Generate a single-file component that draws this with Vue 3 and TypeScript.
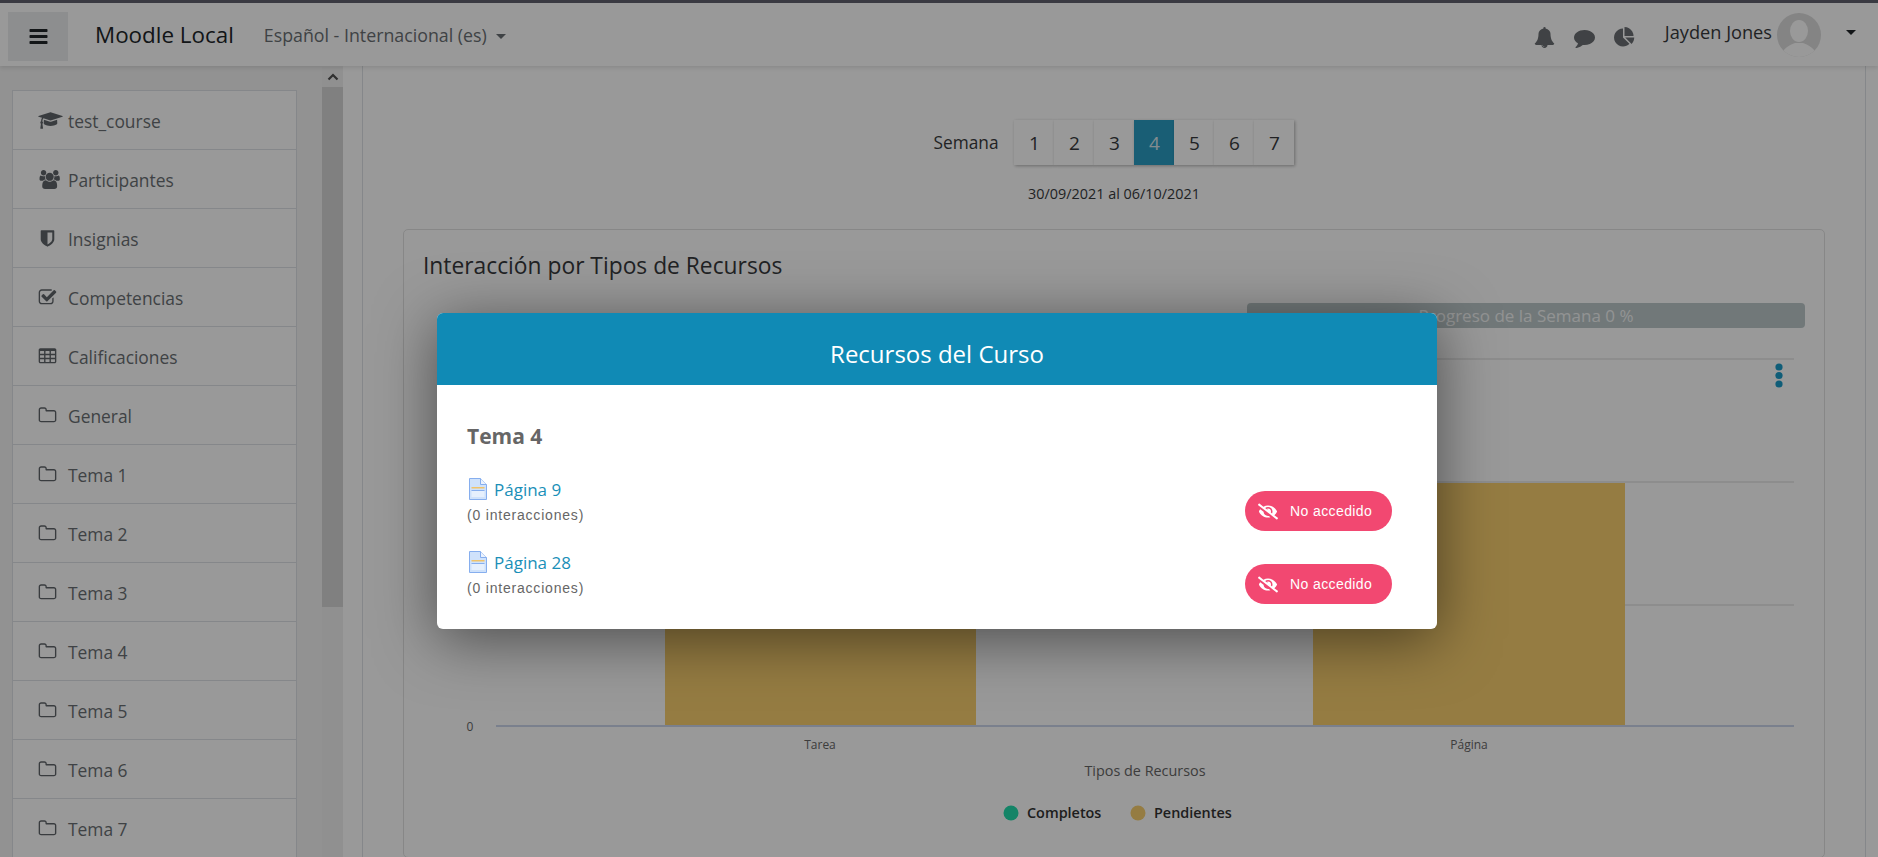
<template>
  <div class="page">
    <header class="navbar">
      <button class="menu-btn">
        <svg class="ic-bars" viewBox="0 0 1792 1792"><path :d="icons.bars" /></svg>
      </button>
      <span class="brand">Moodle Local</span>
      <span class="lang">Español - Internacional ‎(es)‎<i class="caret"></i></span>
      <div class="nav-right">
        <svg class="nav-ic" viewBox="0 0 1792 1792"><path :d="icons.bell" /></svg>
        <svg class="nav-ic" viewBox="0 0 1792 1792"><path :d="icons.comment" /></svg>
        <svg class="nav-ic" viewBox="0 0 1792 1792"><path :d="icons.pie" /></svg>
        <span class="user">Jayden Jones</span>
        <svg class="avatar" viewBox="0 0 44 44">
          <defs><clipPath id="av"><circle cx="22" cy="22" r="22" /></clipPath></defs>
          <circle cx="22" cy="22" r="22" fill="#dcdcdc" />
          <g clip-path="url(#av)" fill="#fff">
            <ellipse cx="22" cy="18" rx="9" ry="11" />
            <path d="M4 44c1-9 9-12 14-14h8c5 2 13 5 14 14z" />
          </g>
        </svg>
        <i class="caret dark"></i>
      </div>
    </header>

    <div class="layout">
      <aside class="sidebar">
        <div class="side-list">
          <a v-for="item in sideItems" :key="item.label" class="side-item">
            <span class="side-ic">
              <svg :width="item.w" height="19" :viewBox="item.box"><path :d="item.path" /></svg>
            </span>
            {{ item.label }}
          </a>
        </div>
        <div class="scrollbar">
          <svg class="scroll-up" viewBox="0 0 12 8"><path d="M1.5 6.5 6 2l4.5 4.5" /></svg>
          <div class="scroll-thumb"></div>
        </div>
      </aside>

      <main class="content">
        <div class="weeks">
          <span class="weeks-label">Semana</span>
          <div class="week-btns">
            <span v-for="w in weeks" :key="w" class="week" :class="{ active: w === 4 }">{{ w }}</span>
          </div>
        </div>
        <p class="range">30/09/2021 al 06/10/2021</p>

        <section class="card">
          <h3 class="card-title">Interacción por Tipos de Recursos</h3>
          <div class="progress">Progreso de la Semana 0 %</div>
          <svg class="chart" width="1420" height="527" viewBox="404 330 1420 527">
            <line v-for="y in [359, 482, 605]" :key="y" x1="496" x2="1794" :y1="y" :y2="y" stroke="#e6e6e6" stroke-width="1.5" />
            <rect x="665" y="483" width="311" height="243" fill="#f8cf6f" />
            <rect x="1313" y="483" width="312" height="243" fill="#f8cf6f" />
            <line x1="496" x2="1794" y1="726" y2="726" stroke="#ccd6eb" stroke-width="2" />
            <circle cx="1779" cy="367" r="3.6" fill="#1a9cc9" />
            <circle cx="1779" cy="375.500" r="3.6" fill="#1a9cc9" />
            <circle cx="1779" cy="384" r="3.6" fill="#1a9cc9" />
            <text x="470" y="731" class="axis" text-anchor="middle">0</text>
            <text x="820" y="749" class="axis" text-anchor="middle">Tarea</text>
            <text x="1469" y="749" class="axis" text-anchor="middle">Página</text>
            <text x="1145" y="776" class="axis-title" text-anchor="middle">Tipos de Recursos</text>
            <circle cx="1011" cy="813" r="7.500" fill="#22ddac" />
            <text x="1027" y="818" class="legend">Completos</text>
            <circle cx="1138" cy="813" r="7.500" fill="#f8cf6f" />
            <text x="1154" y="818" class="legend">Pendientes</text>
          </svg>
        </section>
      </main>
    </div>

    <div class="overlay">
      <div class="modal">
        <div class="modal-head">Recursos del Curso</div>
        <div class="modal-body">
          <h4 class="topic">Tema 4</h4>
          <div v-for="res in resources" :key="res" class="res-row">
            <div>
              <a class="res-link">
                <svg class="page-ic" viewBox="0 0 18 22">
                  <path d="M.5.5h11l6 6v15H.5z" fill="#cfe2fb" stroke="#86aeee" />
                  <path d="M11.500.5v6h6" fill="#eaf2fe" stroke="#86aeee" />
                  <rect x="2.500" y="9" width="13" height="1.500" fill="#f0c36a" />
                  <rect x="2.500" y="12" width="13" height="1" fill="#86aeee" />
                  <rect x="2.500" y="13" width="13" height="6" fill="#e6f0fd" />
                </svg>
                {{ res }}
              </a>
              <div class="res-sub">(0 interacciones)</div>
            </div>
            <span class="pill">
              <svg class="pill-ic" viewBox="0 0 640 512"><path :d="icons.eyeSlash" /></svg>
              No accedido
            </span>
          </div>
        </div>
      </div>
    </div>
  </div>
</template>

<script setup lang="ts">
const icons = {
  bars: 'M1664 1344v128q0 26-19 45t-45 19h-1408q-26 0-45-19t-19-45v-128q0-26 19-45t45-19h1408q26 0 45 19t19 45zm0-512v128q0 26-19 45t-45 19h-1408q-26 0-45-19t-19-45v-128q0-26 19-45t45-19h1408q26 0 45 19t19 45zm0-512v128q0 26-19 45t-45 19h-1408q-26 0-45-19t-19-45v-128q0-26 19-45t45-19h1408q26 0 45 19t19 45z',
  bell: 'M912 1696q0-16-16-16-59 0-101.5-42.5t-42.5-101.5q0-16-16-16t-16 16q0 73 51.5 124.5t124.5 51.5q16 0 16-16zm816-288q0 52-38 90t-90 38h-448q0 106-75 181t-181 75-181-75-75-181h-448q-52 0-90-38t-38-90q50-42 91-88t85-119.5 74.5-158.5 50-206 19.5-260q0-152 117-282.5t307-158.5q-8-19-8-39 0-40 28-68t68-28 68 28 28 68q0 20-8 39 190 28 307 158.5t117 282.5q0 139 19.5 260t50 206 74.5 158.5 85 119.5 91 88z',
  comment: 'M1792 896q0 174-120 321.5t-326 233-450 85.5q-70 0-145-8-198 175-460 242-49 14-114 22-17 2-30.5-9t-17.5-29v-1q-3-4-.5-12t2-10 4.5-9.5l6-9 7-8.5 8-9q7-8 31-34.5t34.5-38 31-39.5 32.5-51 27-59 26-76q-157-89-247.5-220t-90.5-281q0-130 71-248.5t191-204.5 286-136.5 348-50.5q244 0 450 85.5t326 233 120 321.5z',
  pie: 'M768 890l546 546q-106 108-247.5 168t-298.5 60q-209 0-385.5-103t-279.5-279.5-103-385.5 103-385.5 279.5-279.5 385.5-103v762zm187 6h773q0 157-60 298.5t-168 247.5zm709-128h-768v-768q209 0 385.5 103t279.5 279.5 103 385.5z',
  eyeSlash: 'M320 400c-75.85 0-137.25-58.71-142.9-133.11L72.2 185.82c-13.79 17.3-26.48 35.59-36.72 55.59a32.35 32.35 0 0 0 0 29.19C89.71 376.41 197.07 448 320 448c26.91 0 52.87-4 77.89-10.46L346 397.39a144.13 144.13 0 0 1-26 2.61zm313.82 58.1l-110.55-85.44a331.25 331.25 0 0 0 81.25-102.07 32.35 32.35 0 0 0 0-29.19C550.29 135.59 442.93 64 320 64a308.15 308.15 0 0 0-147.32 37.7L45.46 3.37A16 16 0 0 0 23 6.18L3.37 31.45A16 16 0 0 0 6.18 53.9l588.36 454.73a16 16 0 0 0 22.46-2.81l19.64-25.27a16 16 0 0 0-2.82-22.45zm-183.72-142l-39.3-30.38A94.75 94.75 0 0 0 416 256a94.76 94.76 0 0 0-121.31-92.21A47.65 47.65 0 0 1 304 192a46.64 46.64 0 0 1-1.54 10l-73.61-56.89A142.31 142.31 0 0 1 320 112a143.92 143.92 0 0 1 144 144c0 21.63-5.29 41.79-13.9 60.11z',
  cap: 'M1774 836l18 316q4 69-82 128t-235 93.5-323 34.5-323-34.5-235-93.5-82-128l18-316 574 181q22 7 48 7t48-7zm530-324q0 23-22 31l-1120 352q-4 1-10 1t-10-1l-652-206q-43 34-71 111.5t-34 178.5q63 36 63 109 0 69-58 107l58 433q2 14-8 25-9 11-24 11h-192q-15 0-24-11-10-11-8-25l58-433q-58-38-58-107 0-73 65-111 11-207 98-330l-333-104q-22-8-22-31t22-31l1120-352q4-1 10-1t10 1l1120 352q22 8 22 31z',
  users: 'M657 896q-162 5-265 128h-134q-82 0-138-40.5t-56-118.5q0-353 124-353 6 0 43.5 21t97.5 42.5 119 21.5q67 0 133-23-5 37-5 66 0 139 81 256zm1071 637q0 120-73 189.5t-194 69.5h-874q-121 0-194-69.5t-73-189.5q0-53 3.5-103.5t14-109 26.5-108.5 43-97.5 62-81 85.5-53.5 111.5-20q10 0 43 21.5t73 48 107 48 135 21.5 135-21.5 107-48 73-48 43-21.5q61 0 111.5 20t85.5 53.5 62 81 43 97.5 26.5 108.5 14 109 3.5 103.5zm-1024-1277q0 106-75 181t-181 75-181-75-75-181 75-181 181-75 181 75 75 181zm704 384q0 159-112.5 271.5t-271.5 112.5-271.5-112.5-112.5-271.5 112.5-271.5 271.5-112.5 271.5 112.5 112.5 271.5zm576 225q0 78-56 118.5t-138 40.5h-134q-103-123-265-128 81-117 81-256 0-29-5-66 66 23 133 23 59 0 119-21.5t97.5-42.5 43.5-21q124 0 124 353zm-128-609q0 106-75 181t-181 75-181-75-75-181 75-181 181-75 181 75 75 181z',
  shield: 'M1344 960v-640h-448v1137q119-63 213-137 235-184 235-360zm192-768v768q0 86-33.5 170.5t-83 150-118 127.5-126.5 103-121 77.5-89.5 49.5-42.5 20q-12 6-26 6t-26-6q-16-7-42.5-20t-89.5-49.5-121-77.5-126.5-103-118-127.5-83-150-33.5-170.5v-768q0-26 19-45t45-19h1152q26 0 45 19t19 45z',
  check: 'M1472 930v318q0 119-84.5 203.5t-203.5 84.5h-832q-119 0-203.5-84.5t-84.5-203.5v-832q0-119 84.5-203.5t203.5-84.5h832q63 0 117 25 15 7 18 23 3 17-9 29l-49 49q-10 10-23 10-3 0-9-2-23-6-45-6h-832q-66 0-113 47t-47 113v832q0 66 47 113t113 47h832q66 0 113-47t47-113v-254q0-13 9-22l64-64q10-10 23-10 6 0 12 3 20 8 20 29zm231-489l-814 814q-24 24-57 24t-57-24l-430-430q-24-24-24-57t24-57l110-110q24-24 57-24t57 24l263 263 647-647q24-24 57-24t57 24l110 110q24 24 24 57t-24 57z',
  table: 'M576 1376v-192q0-14-9-23t-23-9h-320q-14 0-23 9t-9 23v192q0 14 9 23t23 9h320q14 0 23-9t9-23zm0-384v-192q0-14-9-23t-23-9h-320q-14 0-23 9t-9 23v192q0 14 9 23t23 9h320q14 0 23-9t9-23zm512 384v-192q0-14-9-23t-23-9h-320q-14 0-23 9t-9 23v192q0 14 9 23t23 9h320q14 0 23-9t9-23zm-512-768v-192q0-14-9-23t-23-9h-320q-14 0-23 9t-9 23v192q0 14 9 23t23 9h320q14 0 23-9t9-23zm512 384v-192q0-14-9-23t-23-9h-320q-14 0-23 9t-9 23v192q0 14 9 23t23 9h320q14 0 23-9t9-23zm512 384v-192q0-14-9-23t-23-9h-320q-14 0-23 9t-9 23v192q0 14 9 23t23 9h320q14 0 23-9t9-23zm-512-768v-192q0-14-9-23t-23-9h-320q-14 0-23 9t-9 23v192q0 14 9 23t23 9h320q14 0 23-9t9-23zm512 384v-192q0-14-9-23t-23-9h-320q-14 0-23 9t-9 23v192q0 14 9 23t23 9h320q14 0 23-9t9-23zm0-384v-192q0-14-9-23t-23-9h-320q-14 0-23 9t-9 23v192q0 14 9 23t23 9h320q14 0 23-9t9-23zm128-320v1088q0 66-47 113t-113 47h-1344q-66 0-113-47t-47-113v-1088q0-66 47-113t113-47h1344q66 0 113 47t47 113z',
  folder: 'M1600 1312v-704q0-40-28-68t-68-28h-704q-40 0-68-28t-28-68v-64q0-40-28-68t-68-28h-320q-40 0-68 28t-28 68v960q0 40 28 68t68 28h1216q40 0 68-28t28-68zm128-704v704q0 92-66 158t-158 66h-1216q-92 0-158-66t-66-158v-960q0-92 66-158t158-66h320q92 0 158 66t66 158v32h672q92 0 158 66t66 158z'
}

interface SideItem {
  label: string
  path: string
  box: string
  w: number
}

const square = '0 0 1792 1792'

const folderItem = (label: string): SideItem => ({ label, path: icons.folder, box: square, w: 19 })

const sideItems: SideItem[] = [
  { label: 'test_course', path: icons.cap, box: '0 0 2304 1792', w: 25 },
  { label: 'Participantes', path: icons.users, box: '0 0 1920 1792', w: 22 },
  { label: 'Insignias', path: icons.shield, box: square, w: 19 },
  { label: 'Competencias', path: icons.check, box: square, w: 19 },
  { label: 'Calificaciones', path: icons.table, box: square, w: 19 },
  folderItem('General'),
  ...[1, 2, 3, 4, 5, 6, 7].map((n) => folderItem(`Tema ${n}`))
]

const weeks = [1, 2, 3, 4, 5, 6, 7]
const resources = ['Página 9', 'Página 28']
</script>

<style scoped>
.page {
  position: relative;
  width: 1878px;
  height: 857px;
  overflow: hidden;
  background: #fff;
  border-top: 3px solid #3a3a42;
  box-sizing: border-box;
  font-family: "Open Sans", "Noto Sans", sans-serif;
  color: #373a3c;
}

.navbar {
  display: flex;
  align-items: center;
  height: 63px;
  padding-left: 8px;
  background: #fff;
  box-shadow: 0 2px 4px rgba(0, 0, 0, 0.1);
  position: relative;
  z-index: 1;
}

.menu-btn {
  display: flex;
  align-items: center;
  justify-content: center;
  width: 60px;
  height: 49px;
  margin-top: 4px;
  border: 0;
  background: #ebedef;
  padding: 0;
}

.ic-bars {
  width: 21px;
  height: 21px;
  fill: #212529;
}

.brand {
  margin-left: 27px;
  font-size: 22.4px;
  color: #212529;
}

.lang {
  margin-left: 30px;
  font-size: 17.8px;
  color: #6a6f73;
}

.caret {
  display: inline-block;
  margin-left: 9px;
  border-top: 5px solid #6a6f73;
  border-left: 5px solid transparent;
  border-right: 5px solid transparent;
  vertical-align: 3px;
}

.caret.dark {
  border-top-color: #212529;
  margin-left: 25px;
  margin-top: -4px;
}

.nav-right {
  display: flex;
  align-items: center;
  margin-left: auto;
  padding-right: 22px;
}

.nav-ic {
  width: 21px;
  height: 21px;
  fill: #6b6f73;
  margin-right: 19px;
  margin-top: 6px;
}

.user {
  margin-left: 11px;
  font-size: 18.2px;
  color: #373a3c;
  margin-top: -6px;
}

.avatar {
  width: 44px;
  height: 44px;
  margin-left: 5px;
}

.layout {
  display: flex;
  height: 791px;
}

.sidebar {
  display: flex;
  width: 343px;
  flex: none;
  background: #f3f3f3;
}

.side-list {
  width: 285px;
  margin: 24px 25px 0 12px;
  background: #fff;
  border: 1px solid #dee2e6;
  border-bottom: 0;
  box-sizing: border-box;
}

.side-item {
  display: flex;
  align-items: center;
  height: 59px;
  padding: 1px 0 0 25px;
  box-sizing: border-box;
  border-bottom: 1px solid #dee2e6;
  font-size: 17.4px;
  color: #6a6f73;
}

.side-ic {
  display: flex;
  width: 30px;
  flex: none;
}

.side-ic svg {
  fill: #60656a;
}

.scrollbar {
  width: 21px;
  flex: none;
  background: #f1f1f1;
}

.scroll-up {
  display: block;
  width: 12px;
  height: 8px;
  margin: 7px auto 6px;
  fill: none;
  stroke: #505050;
  stroke-width: 2.2;
}

.scroll-thumb {
  height: 520px;
  background: #d6d6d6;
}

.content {
  flex: none;
  width: 1504px;
  margin-left: 19px;
  padding: 54px 40px 0;
  box-sizing: border-box;
  border-left: 1px solid #dee2e6;
  border-right: 1px solid #dee2e6;
}

.weeks {
  display: flex;
  justify-content: center;
  align-items: center;
}

.weeks-label {
  font-size: 17.3px;
  margin-right: 16px;
  color: #373a3c;
}

.week-btns {
  display: flex;
}

.week {
  display: flex;
  align-items: center;
  justify-content: center;
  width: 40px;
  height: 45px;
  font-size: 19px;
  background: #fff;
  box-shadow: 1px 1px 3px rgba(0, 0, 0, 0.3);
  color: #373a3c;
}

.week.active {
  background: #2a9dc4;
  color: #d8e8ee;
}

.range {
  margin: 19px 0 25px;
  text-align: center;
  font-size: 14.4px;
  line-height: 20px;
  color: #373a3c;
}

.card {
  border: 1px solid #e2e2e2;
  border-radius: 5px;
  background: #fff;
}

.card-title {
  margin: 0;
  padding: 22px 0 0 19px;
  font-size: 22.8px;
  line-height: 28px;
  font-weight: 400;
  color: #373a3c;
}

.progress {
  height: 25px;
  margin: 23px 19px 0 843px;
  border-radius: 4px;
  background: #bdc8ca;
  color: #f4f6f6;
  font-size: 17px;
  line-height: 25px;
  text-align: center;
}

.chart {
  display: block;
  margin-top: 2px;
}

.axis {
  font-size: 12px;
  fill: #666;
}

.axis-title {
  font-size: 14.4px;
  fill: #666;
}

.legend {
  font-size: 14.4px;
  font-weight: 600;
  fill: #333;
}

.overlay {
  position: absolute;
  inset: -3px 0 0 0;
  background: rgba(0, 0, 0, 0.4);
  z-index: 5;
}

.modal {
  width: 1000px;
  height: 316px;
  margin: 313px 0 0 437px;
  border-radius: 6px;
  overflow: hidden;
  background: #fff;
  box-shadow: 0 10px 60px rgba(0, 0, 0, 0.5);
}

.modal-head {
  height: 72px;
  background: #108ab5;
  color: #fff;
  font-size: 24px;
  line-height: 82px;
  text-align: center;
}

.modal-body {
  padding: 36px 45px 0 30px;
}

.topic {
  margin: 0 0 25px;
  font-size: 21px;
  line-height: 30px;
  font-weight: 700;
  color: #666;
}

.res-row {
  display: flex;
  justify-content: space-between;
  height: 73px;
}

.res-link {
  display: flex;
  align-items: center;
  height: 24px;
  margin-top: 1px;
  font-size: 17px;
  color: #1a8fb8;
}

.page-ic {
  width: 18px;
  height: 22px;
  margin: 0 7px 0 2px;
}

.res-sub {
  margin-top: 4px;
  font-family: "Liberation Sans", Arial, sans-serif;
  font-size: 14px;
  line-height: 20px;
  letter-spacing: 0.8px;
  color: #666;
}

.pill {
  display: flex;
  align-items: center;
  height: 40px;
  width: 147px;
  margin-top: 15px;
  padding-left: 13px;
  box-sizing: border-box;
  border-radius: 20px;
  background: #f24871;
  color: #fff;
  font-family: "Liberation Sans", Arial, sans-serif;
  font-size: 14px;
  letter-spacing: 0.4px;
}

.pill-ic {
  width: 20px;
  height: 19px;
  margin-right: 12px;
  fill: #fff;
}
</style>

<style>
html,
body {
  margin: 0;
  background: #fff;
}
</style>
